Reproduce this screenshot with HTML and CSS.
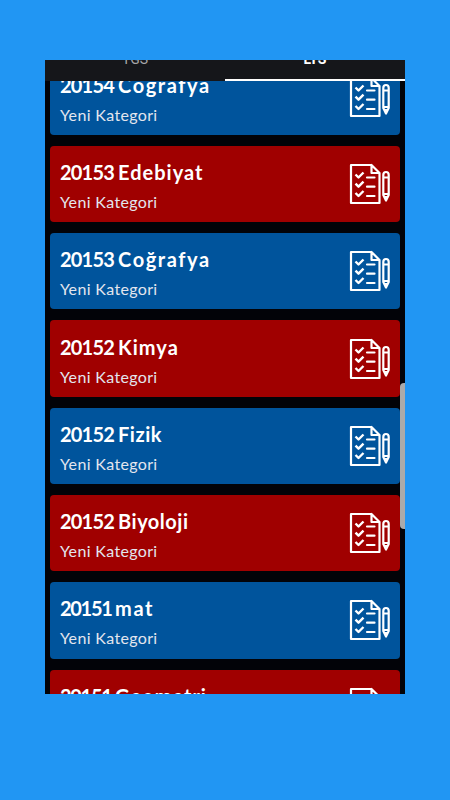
FILE: index.html
```
<!DOCTYPE html>
<html lang="tr">
<head>
    <meta charset="UTF-8">
    <meta name="viewport" content="width=device-width, initial-scale=1.0">
    <title>YGS LYS</title>
    <link rel="stylesheet" href="styles.css">
</head>
<body>
    <!-- shared checklist + pencil icon -->
    <svg class="sprite" width="0" height="0">
        <symbol id="checklist" viewBox="0 0 42 42">
            <g fill="none" stroke="#fff" stroke-width="2.2" stroke-linejoin="round">
                <path d="M22.5 2H2v38h28.5V10L22.5 2v8h8"/>
                <path d="M6.5 11.5l3 3 5-5M6.5 20.7l3 3 5-5M6.5 30l3 3 5-5" stroke-width="2.4"/>
                <path d="M18 14.5h7.5M18 23.7h7.5M18 33h7.5" stroke-width="2.2" stroke-linecap="round"/>
                <path d="M34.3 12c0-4 5.4-4 5.4 0v20L37 37.5 34.3 32zM34.3 14.5h5.4M34.3 31h5.4"/>
            </g>
            <path d="M35 33h4l-2 5z" fill="#fff"/>
        </symbol>
    </svg>

    <div class="screen">
        <div class="tabs">
            <div class="tab">YGS</div>
            <div class="tab active">LYS</div>
        </div>
        <div class="list">
            <div class="card blue">
                <div class="info">
                    <h2 class="wide"><span class="code">20154 </span>Coğrafya</h2>
                    <p>Yeni Kategori</p>
                </div>
                <svg class="icon"><use href="#checklist"/></svg>
            </div>
            <div class="card red">
                <div class="info">
                    <h2><span class="code">20153 </span>Edebiyat</h2>
                    <p>Yeni Kategori</p>
                </div>
                <svg class="icon"><use href="#checklist"/></svg>
            </div>
            <div class="card blue">
                <div class="info">
                    <h2 class="wide"><span class="code">20153 </span>Coğrafya</h2>
                    <p>Yeni Kategori</p>
                </div>
                <svg class="icon"><use href="#checklist"/></svg>
            </div>
            <div class="card red">
                <div class="info">
                    <h2><span class="code">20152 </span>Kimya</h2>
                    <p>Yeni Kategori</p>
                </div>
                <svg class="icon"><use href="#checklist"/></svg>
            </div>
            <div class="card blue">
                <div class="info">
                    <h2 class="narrow"><span class="code">20152 </span>Fizik</h2>
                    <p>Yeni Kategori</p>
                </div>
                <svg class="icon"><use href="#checklist"/></svg>
            </div>
            <div class="card red">
                <div class="info">
                    <h2 class="narrow"><span class="code">20152 </span>Biyoloji</h2>
                    <p>Yeni Kategori</p>
                </div>
                <svg class="icon"><use href="#checklist"/></svg>
            </div>
            <div class="card blue">
                <div class="info">
                    <h2 class="wide"><span class="code tight">20151 </span>mat</h2>
                    <p>Yeni Kategori</p>
                </div>
                <svg class="icon"><use href="#checklist"/></svg>
            </div>
            <div class="card red">
                <div class="info">
                    <h2><span class="code tight">20151 </span>Geometri</h2>
                    <p>Yeni Kategori</p>
                </div>
                <svg class="icon"><use href="#checklist"/></svg>
            </div>
        </div>
        <div class="scrollbar"></div>
    </div>
</body>
</html>
```
FILE: styles.css
```
* {
    box-sizing: border-box;
}

body {
    margin: 0;
    height: 800px;
    padding: 60px 45px 0;
    background: #2196f3;
    font-family: Lato, sans-serif;
    overflow: hidden;
}

.sprite {
    display: block;
}

.screen {
    position: relative;
    width: 360px;
    height: 634px;
    background: #020308;
    overflow: hidden;
}

/* the tab bar is scrolled partly out of the screen */
.tabs {
    position: relative;
    z-index: 1;
    display: flex;
    height: 47.4px;
    margin-top: -26px;
    background: #15161a;
}

.tab {
    flex: 1;
    padding-top: 17px;
    text-align: center;
    font-family: Roboto, sans-serif;
    font-size: 14px;
    line-height: 16px;
    color: #a5a5a8;
}

.tab.active {
    color: #fff;
    font-weight: bold;
    border-bottom: 2px solid #fff;
}

.list {
    display: flex;
    flex-direction: column;
    gap: 11px;
    margin-top: -22.9px;
    padding: 0 5px;
}

.card {
    display: flex;
    flex-shrink: 0;
    align-items: center;
    justify-content: space-between;
    height: 76.3px;
    padding: 0 9px 0 10px;
    border-radius: 4px;
    color: #fff;
}

.blue {
    background: #00549c;
}

.red {
    background: #a00000;
}

.info {
    padding-top: 3px;
}

.card h2 {
    margin: 0 0 7px;
    font-size: 20px;
    line-height: 26px;
    letter-spacing: 1px;
    white-space: nowrap;
}

.card h2.wide {
    letter-spacing: 1.6px;
}

.card h2.narrow {
    letter-spacing: 0.5px;
}

.code {
    letter-spacing: -0.8px;
}

.code.tight {
    letter-spacing: -1.3px;
}

.card p {
    margin: 0;
    font-size: 16px;
    line-height: 20px;
    letter-spacing: 0.35px;
    color: #e3e6ee;
}

.icon {
    width: 42px;
    height: 42px;
}

.scrollbar {
    position: absolute;
    top: 323px;
    right: 0;
    width: 5px;
    height: 146px;
    border-radius: 4px 0 0 4px;
    background: #aaa;
}
```
